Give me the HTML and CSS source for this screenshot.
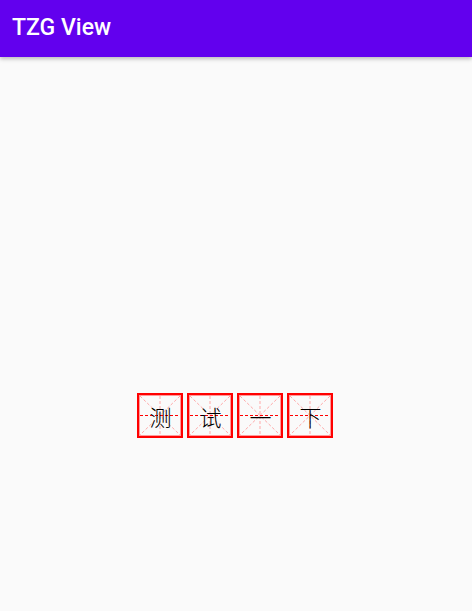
FILE: index.html
```html
<!DOCTYPE html>
<html>
<head>
<meta charset="utf-8">
<link rel="stylesheet" href="styles.css">
</head>
<body>
<header class="appbar"><span class="title">TZG View</span></header>
<main class="content">
  <div class="grid-row">
    <div class="cell">
      <svg class="guides" viewBox="0 0 46 45" preserveAspectRatio="none"><rect x="1" y="1" width="44" height="43" fill="none" stroke="#ff0000" stroke-width="2"/><rect x="2.5" y="2.5" width="41" height="40" fill="none" stroke="#ff9a9a" stroke-width="1"/><line x1="3" y1="3" x2="43" y2="42" class="d"/><line x1="43" y1="3" x2="3" y2="42" class="d"/><line x1="23" y1="3" x2="23" y2="42" class="d"/><line x1="3" y1="22.5" x2="43" y2="22.5" class="h"/></svg>
      <span class="ch">测</span>
    </div>
    <div class="cell">
      <svg class="guides" viewBox="0 0 46 45" preserveAspectRatio="none"><rect x="1" y="1" width="44" height="43" fill="none" stroke="#ff0000" stroke-width="2"/><rect x="2.5" y="2.5" width="41" height="40" fill="none" stroke="#ff9a9a" stroke-width="1"/><line x1="3" y1="3" x2="43" y2="42" class="d"/><line x1="43" y1="3" x2="3" y2="42" class="d"/><line x1="23" y1="3" x2="23" y2="42" class="d"/><line x1="3" y1="22.5" x2="43" y2="22.5" class="h"/></svg>
      <span class="ch">试</span>
    </div>
    <div class="cell">
      <svg class="guides" viewBox="0 0 46 45" preserveAspectRatio="none"><rect x="1" y="1" width="44" height="43" fill="none" stroke="#ff0000" stroke-width="2"/><rect x="2.5" y="2.5" width="41" height="40" fill="none" stroke="#ff9a9a" stroke-width="1"/><line x1="3" y1="3" x2="43" y2="42" class="d"/><line x1="43" y1="3" x2="3" y2="42" class="d"/><line x1="23" y1="3" x2="23" y2="42" class="d"/><line x1="3" y1="22.5" x2="43" y2="22.5" class="h"/></svg>
      <span class="ch">一</span>
    </div>
    <div class="cell">
      <svg class="guides" viewBox="0 0 46 45" preserveAspectRatio="none"><rect x="1" y="1" width="44" height="43" fill="none" stroke="#ff0000" stroke-width="2"/><rect x="2.5" y="2.5" width="41" height="40" fill="none" stroke="#ff9a9a" stroke-width="1"/><line x1="3" y1="3" x2="43" y2="42" class="d"/><line x1="43" y1="3" x2="3" y2="42" class="d"/><line x1="23" y1="3" x2="23" y2="42" class="d"/><line x1="3" y1="22.5" x2="43" y2="22.5" class="h"/></svg>
      <span class="ch">下</span>
    </div>
  </div>
</main>
</body>
</html>
```
FILE: styles.css
```css
html, body {
  margin: 0;
  padding: 0;
  background: #fafafa;
  width: 472px;
  height: 611px;
  overflow: hidden;
}
.appbar {
  height: 57px;
  background: #6200ee;
  display: flex;
  align-items: center;
  padding-left: 12px;
  box-shadow: 0 2px 4px rgba(0,0,0,0.25);
  position: relative;
  z-index: 1;
}
.title {
  color: #ffffff;
  font-family: Roboto, "Noto Sans", sans-serif;
  font-weight: 500;
  font-size: 23px;
  margin-top: -2px;
}
.content {
  padding-top: 336px;
  display: flex;
  justify-content: center;
}
.grid-row {
  display: flex;
  gap: 4px;
  margin-left: -2px;
}
.cell {
  position: relative;
  width: 46px;
  height: 45px;
  display: flex;
  align-items: center;
  justify-content: center;
}
.guides {
  position: absolute;
  left: 0;
  top: 0;
  width: 46px;
  height: 45px;
}
.guides .d {
  stroke: #ffa8a8;
  stroke-width: 1;
  stroke-dasharray: 3 2;
}
.guides .h {
  stroke: #ff0000;
  stroke-width: 1;
  stroke-dasharray: 3 2;
}
.ch {
  position: relative;
  font-family: "Noto Sans CJK SC", sans-serif;
  font-size: 22px;
  font-weight: 300;
  line-height: 1;
  color: #000000;
  margin-left: 1px;
}
```
